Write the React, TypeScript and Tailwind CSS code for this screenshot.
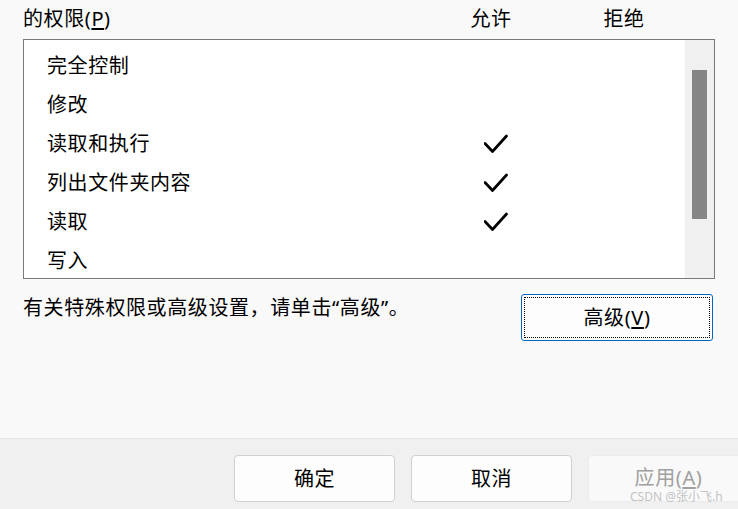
const font = { fontFamily: '"Noto Sans", "Noto Sans CJK SC", sans-serif' };

const rows = [
  { name: '完全控制', allow: false },
  { name: '修改', allow: false },
  { name: '读取和执行', allow: true },
  { name: '列出文件夹内容', allow: true },
  { name: '读取', allow: true },
  { name: '写入', allow: false },
];

function Check() {
  return (
    <svg width="24" height="20" viewBox="0 0 24 20" fill="none">
      <path d="M1 9.5 L8.5 17.5 L22.5 2" stroke="#000" strokeWidth="2.7" strokeLinecap="round" strokeLinejoin="round" />
    </svg>
  );
}

export default function App() {
  return (
    <div className="relative w-[738px] h-[509px] overflow-hidden bg-[#f9f9f9] text-black flex flex-col tracking-[0.6px]" style={font}>
      {/* header */}
      <div className="h-[39px] flex items-center pb-[2px] text-[20px]">
        <div className="flex-1 pl-[23px]">
          的权限(<span className="underline underline-offset-2">P</span>)
        </div>
        <div className="w-[130px] text-center">允许</div>
        <div className="w-[136px] text-center">拒绝</div>
        <div className="w-[46px]" />
      </div>

      {/* permission list */}
      <div className="ml-[23px] w-[692px] h-[240px] border border-[#7a7a7a] bg-white flex overflow-hidden">
        <div className="flex-1 pt-[6px]">
          {rows.map((r) => (
            <div key={r.name} className="h-[39px] grid grid-cols-[442px_60px] items-center text-[20px]">
              <div className="pl-[23px]">{r.name}</div>
              <div className="flex justify-center">{r.allow && <Check />}</div>
            </div>
          ))}
        </div>
        <div className="w-[29px] h-full bg-[#f0f0f0] pt-[30px] pl-[7px]">
          <div className="w-[15px] h-[149px] bg-[#858585]" />
        </div>
      </div>

      {/* advanced */}
      <div className="mt-[15px] flex justify-between pl-[23px] pr-[25px]">
        <p className="text-[20px] leading-[28px]">有关特殊权限或高级设置，请单击“高级”。</p>
        <button className="w-[192px] h-[47px] rounded-[3px] border border-[#0067c0] bg-[#fdfdfd] p-[2px]">
          <div className="w-full h-full border border-dotted border-black flex items-center justify-center text-[20px]">
            高级(<span className="underline underline-offset-2">V</span>)
          </div>
        </button>
      </div>

      <div className="flex-1" />

      {/* footer */}
      <div className="h-[71px] border-t border-[#e5e5e5] bg-[#f0f0f0] flex gap-[16px] pl-[234px] pt-[16px]">
        <button className="shrink-0 w-[161px] h-[47px] rounded-[4px] border border-[#d0d0d0] bg-[#fdfdfd] text-[20px] leading-[24px]">确定</button>
        <button className="shrink-0 w-[161px] h-[47px] rounded-[4px] border border-[#d0d0d0] bg-[#fdfdfd] text-[20px] leading-[24px]">取消</button>
        <button className="shrink-0 w-[161px] h-[47px] rounded-[4px] border border-[#ebebeb] bg-[#f9f9f9] text-[20px] leading-[24px] pb-[2px] text-[#a0a0a0]">
          应用(<span className="underline underline-offset-2">A</span>)
        </button>
      </div>

      <div className="absolute left-[630px] top-[491px] text-[12px] leading-[12px] tracking-normal text-[#c4c4c4]">CSDN @张小飞.h</div>
    </div>
  );
}
